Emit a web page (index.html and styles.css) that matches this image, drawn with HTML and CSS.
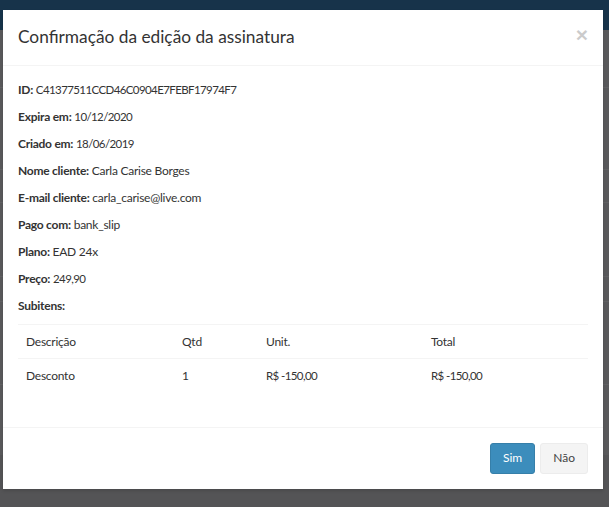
FILE: index.html
```html
<!DOCTYPE html>
<html lang="pt-BR">
<head>
<meta charset="utf-8">
<title>Confirmação da edição da assinatura</title>
<link rel="stylesheet" href="styles.css">
</head>
<body>
<div class="page">
  <div class="topbar"></div>
  <div class="content">
    <div class="bg-row r1"></div>
    <div class="bg-row r2"></div>
    <div class="bg-row r3"></div>
    <div class="bg-row r4"></div>
    <div class="bg-row r5"></div>
    <div class="bg-row r6"></div>
  </div>
</div>

<div class="modal">
  <div class="modal-header">
    <button class="close" type="button">×</button>
    <h4 class="modal-title">Confirmação da edição da assinatura</h4>
  </div>
  <div class="modal-body">
    <p><b>ID:</b> <span class="num">C41377511CCD46C0904E7FEBF17974F7</span></p>
    <p><b>Expira em:</b> <span class="num">10/12/2020</span></p>
    <p><b>Criado em:</b> <span class="num">18/06/2019</span></p>
    <p><b>Nome cliente:</b> Carla Carise Borges</p>
    <p><b>E-mail cliente:</b> carla_carise@live.com</p>
    <p><b>Pago com:</b> bank_slip</p>
    <p><b>Plano:</b> EAD 24x</p>
    <p><b>Preço:</b> <span class="num">249,90</span></p>
    <p><b>Subitens:</b></p>
    <table class="table">
      <colgroup>
        <col class="c1"><col class="c2"><col class="c3"><col class="c4">
      </colgroup>
      <thead>
        <tr><th>Descrição</th><th>Qtd</th><th>Unit.</th><th>Total</th></tr>
      </thead>
      <tbody>
        <tr><td>Desconto</td><td>1</td><td><span class="num">R$ -150,00</span></td><td><span class="num">R$ -150,00</span></td></tr>
      </tbody>
    </table>
  </div>
  <div class="modal-footer">
    <button class="btn btn-primary" type="button">Sim</button>
    <button class="btn btn-default" type="button">Não</button>
  </div>
</div>
</body>
</html>
```

FILE: styles.css
```css
* { box-sizing: border-box; }
html, body { margin: 0; padding: 0; }
body {
  width: 609px;
  height: 507px;
  overflow: hidden;
  background: #545456;
  font-family: Lato, "Liberation Sans", sans-serif;
  font-size: 12px;
  line-height: 17.14px;
  letter-spacing: -0.25px;
  color: #333;
  position: relative;
}

.page { display: flex; flex-direction: column; }
.topbar { height: 30px; background: #17334a; }
.content {
  height: 425px;
  background: #59595b;
  display: flex;
  flex-direction: column;
}
.bg-row { border-bottom: 1px solid #616163; }
.r1 { height: 58px; }
.r2 { height: 82px; }
.r3 { height: 33px; }
.r4 { height: 74px; }
.r5 { height: 25px; }
.r6 { height: 83px; }

.modal {
  position: absolute;
  left: 3px;
  top: 10px;
  width: 600px;
  background: #fff;
  box-shadow: 0 2px 3px rgba(0,0,0,0.125);
}

.modal-header {
  padding: 15px;
  border-bottom: 1px solid #f4f4f4;
}
.modal-title {
  margin: 0;
  font-size: 17.3px;
  font-weight: 400;
  line-height: 24.5px;
  letter-spacing: 0;
  color: #333;
}
.close {
  float: right;
  margin-top: -1px;
  padding: 0;
  border: 0;
  background: transparent;
  font-family: "Liberation Sans", sans-serif;
  font-size: 21px;
  font-weight: 700;
  line-height: 1;
  color: #000;
  opacity: 0.2;
}

.modal-body { padding: 15px; }
.modal-body p { margin: 0 0 9.9px; }
.modal-body b { font-weight: 700; }
.num { font-size: 11.5px; letter-spacing: -0.6px; }

.table {
  width: 100%;
  border-collapse: collapse;
  border-spacing: 0;
  margin-bottom: 20px;
}
.c1 { width: 156px; }
.c2 { width: 84px; }
.c3 { width: 165px; }
.c4 { width: 165px; }
.table th, .table td {
  padding: 8px;
  text-align: left;
  font-weight: 400;
  border-top: 1px solid #f4f4f4;
  line-height: 17.14px;
  vertical-align: top;
}

.modal-footer {
  padding: 15px;
  border-top: 1px solid #f4f4f4;
  display: flex;
  justify-content: flex-end;
  gap: 5px;
}
.btn {
  font-family: inherit;
  font-size: 12px;
  line-height: 16.5px;
  letter-spacing: 0;
  padding: 6px 12px;
  border: 1px solid transparent;
  border-radius: 3px;
  box-shadow: none;
}
.btn-primary {
  background: #3c8dbc;
  border-color: #367fa9;
  color: #fff;
}
.btn-default {
  background: #f4f4f4;
  border-color: #ececec;
  color: #444;
}
```
